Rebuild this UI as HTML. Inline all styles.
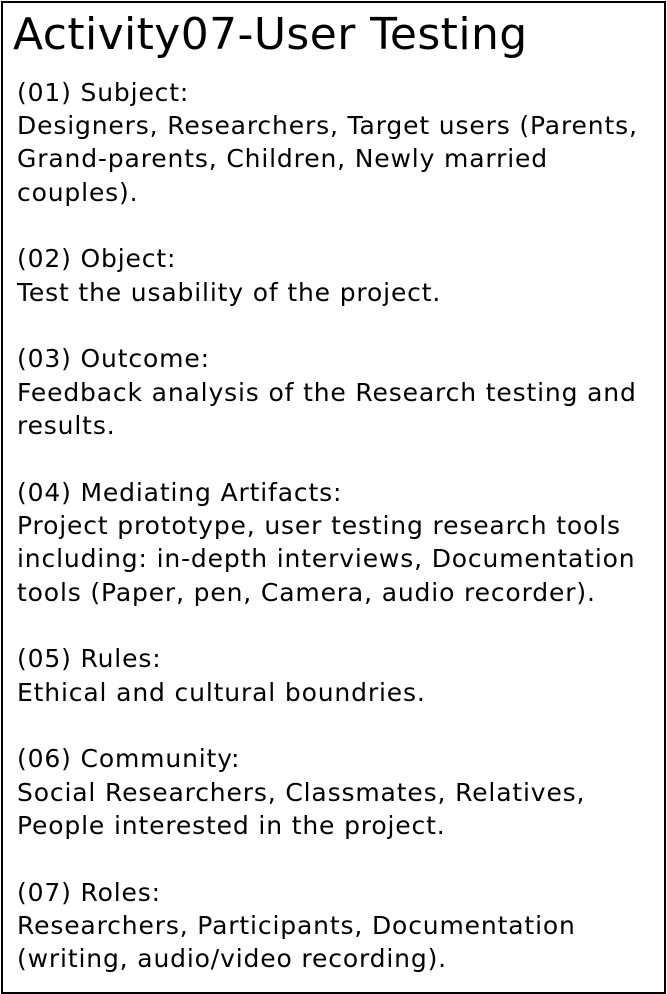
<!DOCTYPE html>
<html><head><meta charset="utf-8"><style>
html,body{margin:0;padding:0;background:#fff;}
body{width:667px;height:994px;position:relative;overflow:hidden;font-family:"DejaVu Sans","Liberation Sans",sans-serif;color:#000;}
.box{position:absolute;left:1px;top:1px;width:661px;height:989px;border:2px solid #000;}
h1{position:absolute;left:13px;top:9px;margin:0;font-weight:normal;font-size:44px;letter-spacing:0.4px;line-height:52px;white-space:nowrap;}
.t{position:absolute;left:17px;top:75.5px;width:645px;font-size:25px;letter-spacing:0.85px;line-height:33.35px;white-space:pre;}
</style></head><body>
<div class="box"></div>
<h1>Activity07-User Testing</h1>
<div class="t">(01) Subject:
Designers, Researchers, Target users (Parents,
Grand-parents, Children, Newly married
couples).

(02) Object:
Test the usability of the project.

(03) Outcome:
Feedback analysis of the Research testing and
results.

(04) Mediating Artifacts:
Project prototype, user testing research tools
including: in-depth interviews, Documentation
tools (Paper, pen, Camera, audio recorder).

(05) Rules:
Ethical and cultural boundries.

(06) Community:
Social Researchers, Classmates, Relatives,
People interested in the project.

(07) Roles:
Researchers, Participants, Documentation
(writing, audio/video recording).</div>
</body></html>
